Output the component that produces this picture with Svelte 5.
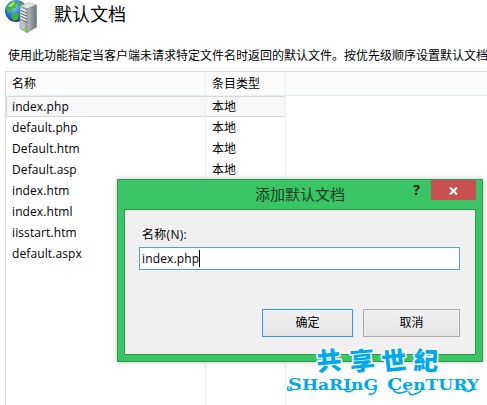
<script>
  const files = ['index.php', 'default.php', 'Default.htm', 'Default.asp', 'index.htm', 'index.html', 'iisstart.htm', 'default.aspx'];
  const brush = [
    { ch: '共', x: 48, tilt: -6 },
    { ch: '享', x: 81, tilt: -5 },
    { ch: '世', x: 113, tilt: -6 },
    { ch: '紀', x: 145, tilt: 3 }
  ];
</script>

<main>
  <header>
    <svg class="server" width="34" height="34" viewBox="0 0 34 34">
      <defs>
        <radialGradient id="ocean" cx=".4" cy=".3" r=".75">
          <stop offset="0" stop-color="#8fd0ff" />
          <stop offset=".5" stop-color="#2f7bdc" />
          <stop offset="1" stop-color="#10318f" />
        </radialGradient>
        <linearGradient id="face"><stop offset="0" stop-color="#cdd2d4" /><stop offset="1" stop-color="#a5abae" /></linearGradient>
        <linearGradient id="side"><stop offset="0" stop-color="#b4babd" /><stop offset="1" stop-color="#6d7579" /></linearGradient>
      </defs>
      <circle cx="12" cy="11" r="11" fill="url(#ocean)" />
      <path d="M3 7Q6 1 11 1L14 3 11 5 12 8 8 9 6 13 3 11ZM15 2Q19 3 21 7L17 8 14 6ZM9 13L15 14 14 19 10 21 7 17Z" fill="#48b52d" />
      <path d="M4 7Q7 2 11 2L9 6 6 7Z" fill="#a5e36c" />
      <path d="M16 6L25 2.500 32.500 5 23 9Z" fill="#e4e7e8" stroke="#a4a9ac" stroke-width=".6" />
      <path d="M16 6L23 9V32.500L16 28.500Z" fill="url(#face)" stroke="#777f83" stroke-width=".6" />
      <path d="M23 9L32.500 5V27L23 32.500Z" fill="url(#side)" stroke="#737a7e" stroke-width=".6" />
      <path d="M17 9L22.500 11.500M17 12L22.500 14.500M17 15L22.500 17.500M17 18L22.500 20.500" stroke="#fff" stroke-width="1.1" />
      <path d="M17 10.500L22.500 13M17 13.500L22.500 16M17 16.500L22.500 19M17 19.500L22.500 22" stroke="#596064" stroke-width=".9" />
      <circle cx="21.500" cy="29.500" r="1.600" fill="#50ed19" />
    </svg>
    <h1>默认文档</h1>
  </header>
  <p class="desc">使用此功能指定当客户端未请求特定文件名时返回的默认文件。按优先级顺序设置默认文档</p>

  <section class="table">
    <div class="row head"><span class="name">名称</span><span class="kind">条目类型</span></div>
    {#each files as file, i}
      <div class="row" class:selected={i === 0}><span class="name">{file}</span><span class="kind">本地</span></div>
    {/each}
    <div class="row rest"><span class="name"></span><span class="kind"></span></div>
  </section>

  <section class="dialog">
    <div class="title">
      <h2>添加默认文档</h2>
      <span class="help">?</span>
      <button class="close" aria-label="关闭">
        <svg width="9" height="8" viewBox="0 0 9 8"><path d="M1 .5L8 7.5M8 .5L1 7.5" stroke="#fff" stroke-width="2" /></svg>
      </button>
    </div>
    <div class="client">
      <label for="doc">名称(N):</label>
      <div class="field" id="doc"><span>index.php</span><i></i></div>
      <div class="actions"><button class="ok">确定</button><button class="cancel">取消</button></div>
    </div>
  </section>

  <svg class="mark" width="206" height="70" viewBox="0 -10 206 70">
    <g class="cn">
      {#each brush as b}
        <text x={b.x} y="25" text-anchor="middle" transform="rotate({b.tilt} {b.x} 15)">{b.ch}</text>
      {/each}
    </g>
    <g class="en">
      <text x="7" y="45" textLength="90" lengthAdjust="spacingAndGlyphs"><tspan class="cap">S</tspan>HaRInG</text>
      <text x="106" y="45" textLength="92" lengthAdjust="spacingAndGlyphs"><tspan class="cap">C</tspan>enTURY</text>
    </g>
    <path class="tails" d="M7 42Q5 46 11 45M63 44Q67 49 72 45M95 43Q95 50 88 49M112 44Q115 51 126 46M128 47Q129 51 134 49Q141 47 141 43M181 44Q186 48 191 45" />
  </svg>
</main>

<style>
  :global(body) { margin: 0; background: #fff; }
  main {
    position: relative; width: 487px; height: 405px; overflow: hidden; background: #fff; color: #000;
    font: 12px/16px "Open Sans", "Noto Sans CJK SC", sans-serif;
  }
  header { display: flex; height: 34px; padding-left: 4px; }
  h1 { margin: 0 0 0 16px; font: 18px/26px "Noto Sans CJK SC", sans-serif; }
  .desc { margin: 13px 0 0 8px; height: 24px; white-space: nowrap; font: 12px/16px "Noto Sans CJK SC", sans-serif; }
  .table { display: flex; flex-direction: column; height: 334px; margin-left: 5px; border-left: 1px solid #dcdcdc; border-top: 1px solid #dcdcdc; box-sizing: border-box; }
  .row { display: flex; height: 21px; flex: none; line-height: 22px; box-sizing: border-box; }
  .name, .kind { box-sizing: border-box; border-right: 1px solid #e8eff8; padding-left: 6px; }
  .name { width: 200px; letter-spacing: .1px; }
  .kind { width: 80px; }
  .head { height: 24px; line-height: 24px; background: #fcfcfc; border-bottom: 1px solid #e8eff8; }
  .selected { width: 280px; background: #f7f7f7; box-shadow: inset 0 0 0 1px #d9d9dc; }
  .rest { flex: 1; }
  .dialog {
    position: absolute; left: 117px; top: 179px; width: 366px; height: 183px; box-sizing: border-box;
    border: 1px solid #2e9a50; background: #3ac464; padding: 0 6px 6px; box-shadow: 0 0 5px rgba(0, 0, 0, .25);
  }
  .title { display: flex; height: 29px; align-items: flex-start; }
  h2 { margin: 0; width: 262px; padding-left: 131px; box-sizing: border-box; font: 15px/28px "Noto Sans CJK SC", sans-serif; color: #173d23; white-space: nowrap; }
  .help { width: 46px; padding-left: 28px; box-sizing: border-box; font: bold 14px/20px "Open Sans", sans-serif; color: #222; }
  .close { display: flex; width: 45px; height: 20px; padding: 1px 0 0; border: 0; background: #c75050; align-items: center; justify-content: center; }
  .client { height: 146px; box-sizing: border-box; border: 1px solid #2e9a50; background: #f0f0f0; padding: 17px 14px 0; }
  label { display: block; height: 20px; padding-left: 3px; line-height: 16px; letter-spacing: .3px; }
  .field { display: flex; width: 321px; height: 23px; box-sizing: border-box; border: 1px solid #569de5; background: #fff; padding-left: 2px; line-height: 22px; letter-spacing: .15px; }
  .field i { width: 1px; height: 17px; margin-top: 2px; background: #000; }
  .actions { display: flex; justify-content: space-between; width: 198px; margin: 39px 0 0 123px; }
  .actions button { height: 28px; padding: 0 0 2px; border: 1px solid #acacac; background: linear-gradient(#f0f0f0, #e5e5e5); color: #000; font: 12px/16px "Noto Sans CJK SC", sans-serif; }
  .actions .ok { width: 91px; border-color: #3399ff; }
  .actions .cancel { width: 97px; }
  .mark { position: absolute; left: 281px; top: 335px; overflow: visible; }
  .mark text { fill: #00a8ec; stroke: #fff; stroke-width: 3px; paint-order: stroke; stroke-linejoin: round; }
  .cn text { font: 900 25px/26px "Noto Sans CJK TC", sans-serif; }
  .en { font: bold 15px "DejaVu Serif", serif; }
  .cap { font-size: 17px; }
  .tails { fill: none; stroke: #00a8ec; stroke-width: 1.6; stroke-linecap: round; }
</style>
